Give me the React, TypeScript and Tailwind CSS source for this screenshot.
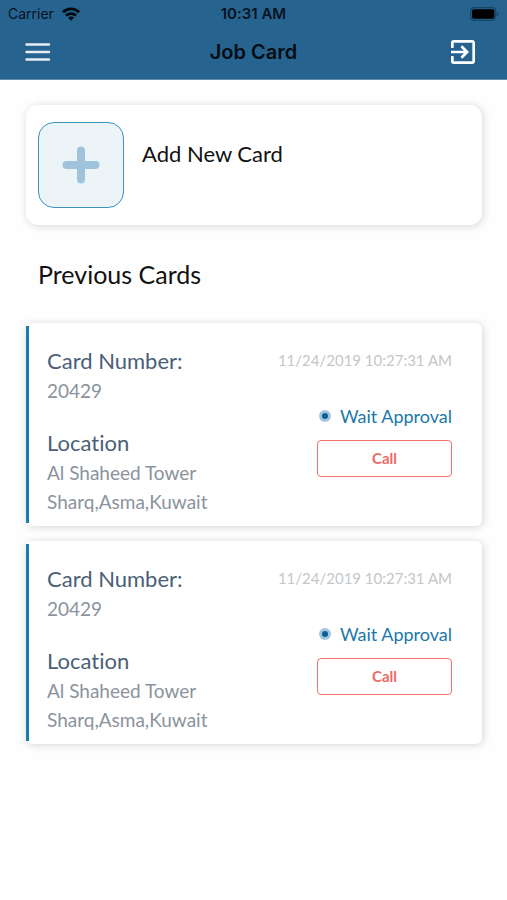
type JobCard = {
  id: number;
  number: string;
  date: string;
  status: string;
  address: string[];
};

const cards: JobCard[] = [
  {
    id: 1,
    number: "20429",
    date: "11/24/2019 10:27:31 AM",
    status: "Wait Approval",
    address: ["Al Shaheed Tower", "Sharq,Asma,Kuwait"],
  },
  {
    id: 2,
    number: "20429",
    date: "11/24/2019 10:27:31 AM",
    status: "Wait Approval",
    address: ["Al Shaheed Tower", "Sharq,Asma,Kuwait"],
  },
];

function StatusBar() {
  return (
    <div className="grid grid-cols-3 items-center h-7 px-2 text-sm text-[#06141f]">
      <div className="flex items-center gap-2">
        <span>Carrier</span>
        <svg width="18" height="14" viewBox="0 0 18 14" aria-hidden="true">
          <g fill="none" stroke="#020a10" strokeWidth="2.8">
            <path d="M1 5.2a11.4 11.4 0 0 1 16 0" />
            <path d="M4 8.6a7.2 7.2 0 0 1 10 0" />
          </g>
          <path d="M9 13.8 6 10.8a4.2 4.2 0 0 1 6 0z" fill="#020a10" />
        </svg>
      </div>
      <span className="text-center text-[15px] font-semibold">10:31 AM</span>
      <svg
        className="justify-self-end"
        width="29"
        height="14"
        viewBox="0 0 29 14"
        aria-hidden="true"
      >
        <rect x="0.7" y="0.7" width="25" height="12.6" rx="3.5" fill="none" stroke="#174564" strokeWidth="1.2" />
        <rect x="2" y="2.2" width="22.4" height="9.6" rx="2" fill="#000" />
        <path d="M27 5v4c1-.3 1.5-1.1 1.5-2s-.5-1.7-1.5-2z" fill="#174564" />
      </svg>
    </div>
  );
}

function Header() {
  return (
    <header className="bg-[#26638f] font-[Inter,sans-serif] border-b border-[#5d8cad]">
      <StatusBar />
      <div className="grid grid-cols-3 items-center h-[51px] px-6 pb-1">
        <button type="button" aria-label="Menu" className="justify-self-start">
          <svg width="28" height="20" viewBox="0 0 28 20" aria-hidden="true">
            <path
              d="M2.5 2.5h22.5M2.5 10h22.5M2.5 17.5h22.5"
              stroke="#e4eef6"
              strokeWidth="2.4"
              strokeLinecap="round"
            />
          </svg>
        </button>
        <h1 className="text-center text-xl font-semibold text-[#030c13] whitespace-nowrap">
          Job Card
        </h1>
        <button type="button" aria-label="Log out" className="justify-self-end mr-1">
          <svg width="32" height="32" viewBox="0 0 24 24" fill="#fff" aria-hidden="true">
            <path d="M10.09 15.59 11.5 17l5-5-5-5-1.41 1.41L12.67 11H3v2h9.67l-2.58 2.59zM19 3H5a2 2 0 0 0-2 2v4h2V5h14v14H5v-4H3v4a2 2 0 0 0 2 2h14c1.1 0 2-.9 2-2V5c0-1.1-.9-2-2-2z" />
          </svg>
        </button>
      </div>
    </header>
  );
}

function Card({ card }: { card: JobCard }) {
  return (
    <li className="flex bg-white rounded-md shadow-[1px_1px_9px_rgba(0,0,0,0.17)]">
      <div className="w-[3px] my-[3px] shrink-0 bg-[#1a7dab]" />
      <div className="flex flex-1 justify-between pl-[18px] pr-[30px] pt-[22px] pb-[10px]">
        <div>
          <h3 className="text-[22px] leading-[31px] text-[#4a6078]">Card Number:</h3>
          <p className="text-[19px] leading-[29px] text-[#8a939d]">{card.number}</p>
          <h3 className="mt-[22px] text-[22px] leading-[31px] text-[#4a6078]">Location</h3>
          {card.address.map((line) => (
            <p key={line} className="text-[19px] leading-[29px] text-[#8a939d]">
              {line}
            </p>
          ))}
        </div>

        <div className="flex flex-col items-end">
          <time className="text-[15px] leading-[31px] text-[#c4c6c8]">{card.date}</time>
          <div className="flex items-center gap-2 mt-[27px] text-lg leading-[26px] text-[#1a78a9]">
            <svg width="14" height="14" viewBox="0 0 14 14" aria-hidden="true">
              <circle cx="7" cy="7" r="6" fill="#a3c6df" />
              <circle cx="7" cy="7" r="3" fill="#0d5f96" />
            </svg>
            <span>{card.status}</span>
          </div>
          <button
            type="button"
            className="mt-[11px] w-[135px] h-[37px] rounded-sm border border-[#f0706c] text-[15px] font-bold text-[#ee6a66]"
          >
            Call
          </button>
        </div>
      </div>
    </li>
  );
}

export default function App() {
  return (
    <div className="min-h-screen bg-[#fefefe] font-[Lato,sans-serif] [font-variant-ligatures:none]">
      <Header />

      <main className="pl-[26px] pr-[25px] pt-[25px]">
        {/* new card */}
        <button
          type="button"
          className="flex items-start w-full px-3 py-[17px] text-left bg-white rounded-xl shadow-[1px_1px_8px_rgba(0,0,0,0.16)]"
        >
          <span className="flex items-center justify-center size-[86px] shrink-0 rounded-2xl border border-[#3c93c2] bg-[#edf4f8]">
            <svg width="38" height="38" viewBox="0 0 38 38" aria-hidden="true">
              <path d="M19 4.5v29M4.5 19h29" stroke="#9fc3dc" strokeWidth="8" strokeLinecap="round" />
            </svg>
          </span>
          <span className="ml-[18px] mt-[17px] text-[22px] leading-[30px] text-[#111]">
            Add New Card
          </span>
        </button>

        {/* list */}
        <h2 className="mt-[33px] px-3 text-[25px] leading-[32px] text-[#111]">Previous Cards</h2>
        <ul className="mt-[33px] flex flex-col gap-[15px]">
          {cards.map((card) => (
            <Card key={card.id} card={card} />
          ))}
        </ul>
      </main>
    </div>
  );
}
